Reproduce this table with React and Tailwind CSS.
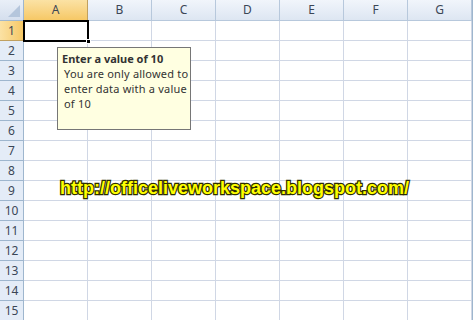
import React from 'react';

const cols = ['A', 'B', 'C', 'D', 'E', 'F', 'G'];
const rows = Array.from({ length: 15 }, (_, i) => i + 1);

export default function App() {
  return (
    <div className="relative w-[476px] h-[320px] overflow-hidden bg-white" style={{ fontFamily: '"Noto Sans", "Open Sans", sans-serif' }}>
      <div className="grid grid-cols-[24px_repeat(7,64px)] grid-rows-[21px_repeat(15,20px)] w-[473px] border-r border-[#9eb6ce]">
        {/* corner */}
        <div className="relative bg-gradient-to-b from-[#e9eff8] to-[#d5dfee] border-r border-b border-[#9eb6ce]">
          <div className="absolute right-[3px] bottom-[3px] w-0 h-0 border-l-[12px] border-l-transparent border-b-[12px] border-b-[#b5c6dc]" />
        </div>
        {cols.map((c, i) => (
          <div
            key={c}
            className={`flex items-center justify-center text-[12px] text-[#3b4656] border-r border-b ${
              i === 0
                ? 'bg-gradient-to-b from-[#fbe2a4] to-[#f6c865] border-[#c0a060]'
                : 'bg-gradient-to-b from-[#f1f5fb] to-[#dde6f2] border-[#b7c8dc]'
            }`}
          >
            {c}
          </div>
        ))}
        {rows.map((r) => (
          <React.Fragment key={r}>
            <div
              className={`flex items-center justify-center text-[12px] text-[#3b4656] border-r border-b ${
                r === 1
                  ? 'bg-gradient-to-r from-[#fbe2a4] to-[#f6c865] border-[#c0a060]'
                  : 'bg-[#e4ecf7] border-[#9eb6ce]'
              }`}
            >
              {r}
            </div>
            {cols.map((c) => (
              <div key={c} className="relative border-r border-b border-[#d0d7e5]">
                {r === 9 && c === 'A' && (
                  <span
                    className="absolute left-[36px] top-[-6px] z-10 whitespace-nowrap text-[18px] font-bold text-[#ffff00] [-webkit-text-stroke:2.4px_#2e2e00] [paint-order:stroke_fill]"
                    style={{ fontFamily: '"Liberation Sans", Arial, sans-serif' }}
                  >
                    http://officeliveworkspace.blogspot.com/
                  </span>
                )}
              </div>
            ))}
          </React.Fragment>
        ))}
      </div>

      {/* active cell A1 */}
      <div className="absolute left-[23px] top-[20px] w-[66px] h-[22px] border-2 border-black" />
      <div className="absolute left-[86px] top-[39px] w-[5px] h-[5px] bg-black border border-white" />

      {/* input message */}
      <div className="absolute left-[57px] top-[47px] w-[134px] h-[83px] bg-[#ffffe1] border border-[#767676] pl-[4px] pr-0 pt-[3px] text-[11px] leading-[15px] text-[#333]">
        <div className="font-bold">Enter a value of 10</div>
        <div className="pl-[2px] tracking-[0.2px]">You are only allowed to enter data with a value of 10</div>
      </div>
    </div>
  );
}
